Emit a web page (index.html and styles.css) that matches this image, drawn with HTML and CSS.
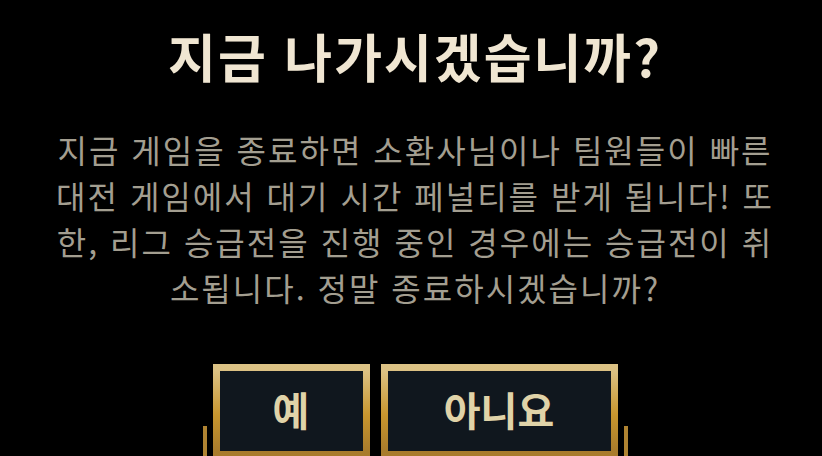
FILE: index.html
```html
<!DOCTYPE html>
<html lang="ko">
<head>
    <meta charset="UTF-8">
    <meta name="viewport" content="width=device-width, initial-scale=1.0">
    <title>게임 종료</title>
    <link rel="stylesheet" href="styles.css">
</head>
<body>
    <div id="quit-dialog">
        <h1 class="dialog-title">지금 나가시겠습니까?</h1>
        <p class="dialog-text">
            지금 게임을 종료하면 소환사님이나 팀원들이 빠른<br>
            대전 게임에서 대기 시간 페널티를 받게 됩니다! 또<br>
            한, 리그 승급전을 진행 중인 경우에는 승급전이 취<br>
            소됩니다. 정말 종료하시겠습니까?
        </p>
        <div class="dialog-buttons">
            <span class="post post-left"></span>
            <button type="button" class="btn btn-yes">예</button>
            <button type="button" class="btn btn-no">아니요</button>
            <span class="post post-right"></span>
        </div>
    </div>
</body>
</html>
```

FILE: styles.css
```css
html, body {
    height: 100%;
}
body {
    margin: 0;
    background: #000;
    font-family: "Noto Sans CJK KR", "Noto Sans", sans-serif;
    overflow: hidden;
}
#quit-dialog {
    display: flex;
    flex-direction: column;
    align-items: center;
    padding: 26px 0 0 8px;
}
.dialog-title {
    margin: 0;
    font-size: 52px;
    line-height: 60px;
    letter-spacing: 2px;
    font-weight: 700;
    color: #f0e6d2;
}
.dialog-text {
    margin: 40px 0 0;
    font-size: 32px;
    line-height: 46px;
    letter-spacing: 2px;
    color: #a39e90;
    text-align: center;
}
.dialog-buttons {
    display: flex;
    align-items: flex-end;
    gap: 11px;
    margin-top: 54px;
}
.btn {
    height: 94px;
    border: 7px solid;
    border-image: linear-gradient(to bottom, #dcc285, #c8962e 55%, #a87b2c) 1;
    background: #10171e;
    color: #e0d3a8;
    font-family: inherit;
    font-size: 40px;
    font-weight: 700;
    padding: 0 0 4px;
}
.btn-yes {
    width: 157px;
}
.btn-no {
    width: 237px;
}
.post {
    width: 16px;
    height: 32px;
    box-sizing: border-box;
    border-bottom: 2px solid #8c6a2c;
}
.post-left {
    border-right: 4px solid #b08432;
    margin-right: -5px;
}
.post-right {
    border-left: 4px solid #b08432;
    margin-left: -5px;
}
```
